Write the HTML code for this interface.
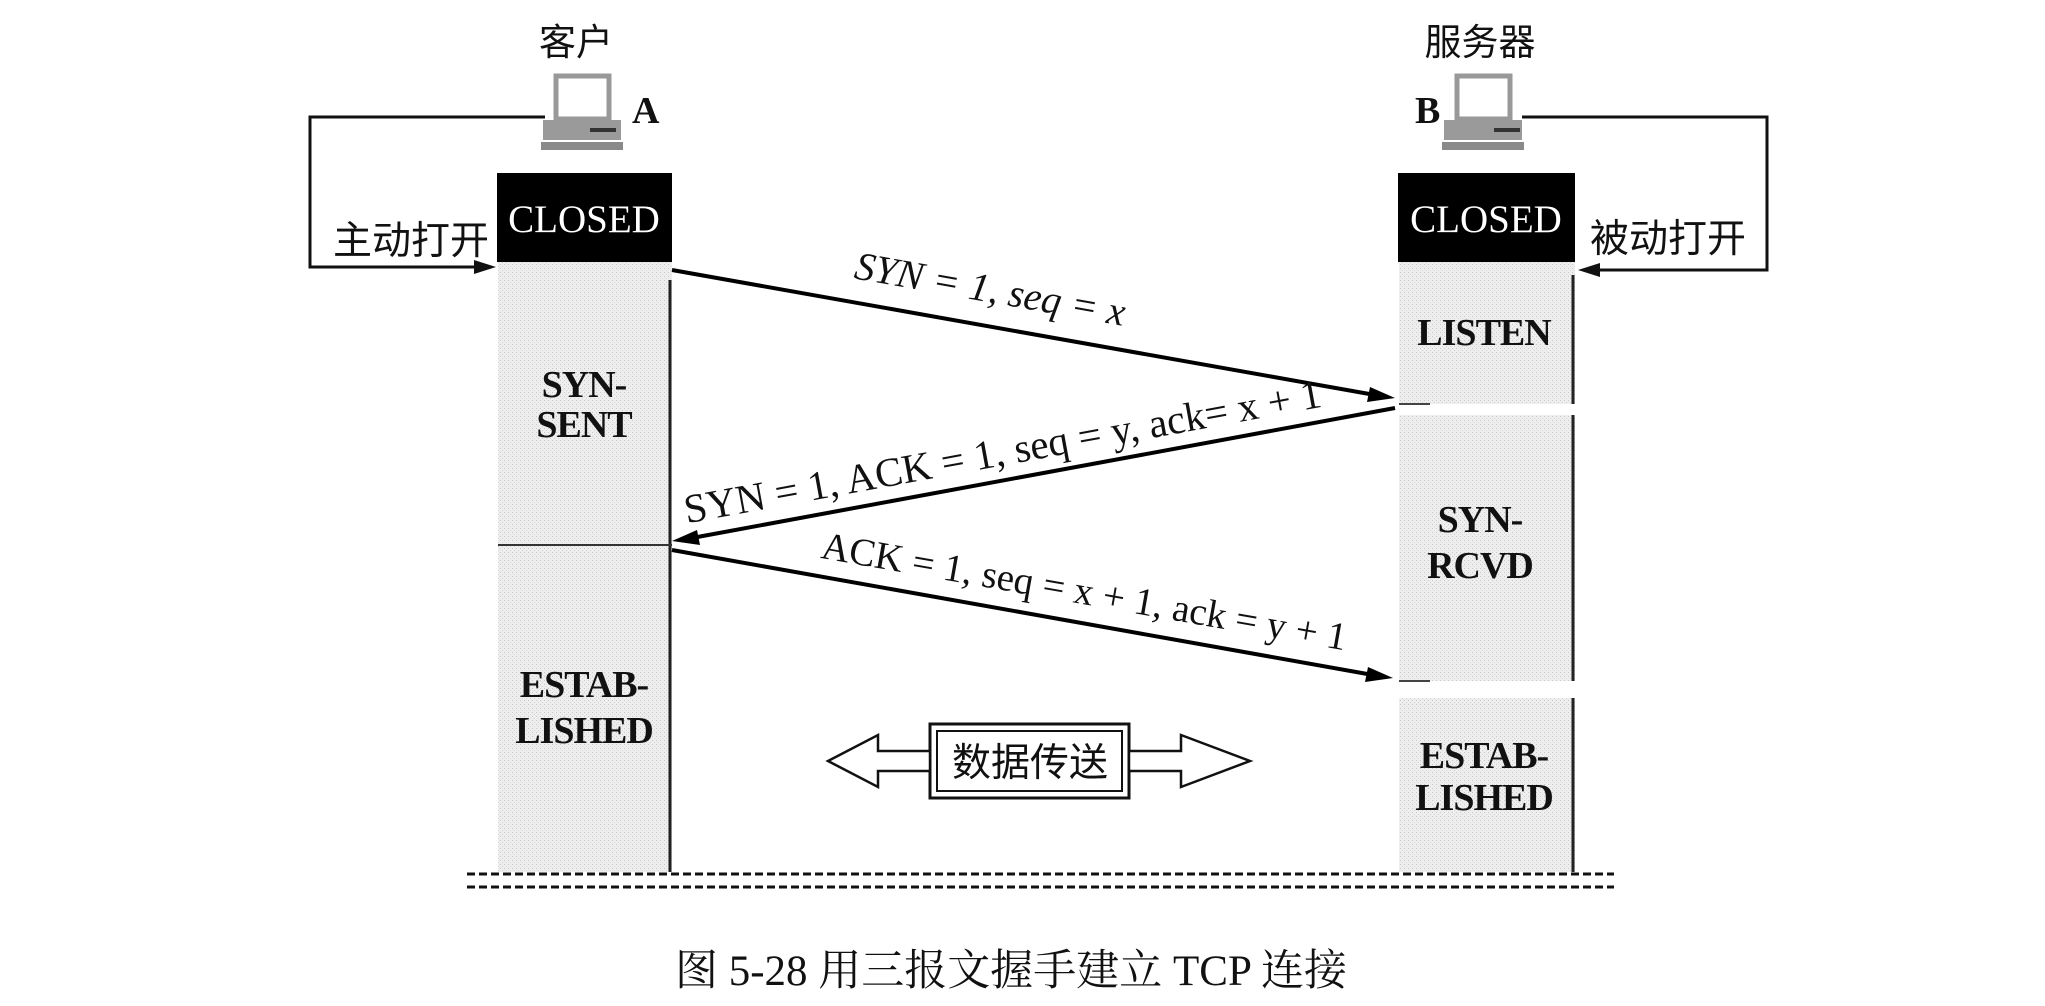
<!DOCTYPE html>
<html><head><meta charset="utf-8"><style>
html,body{margin:0;padding:0;background:#fff;}
svg{display:block}
text{font-family:"Liberation Serif","Noto Serif CJK SC",serif;fill:#111}
.cj{font-family:"Liberation Sans","Noto Sans CJK SC",sans-serif}
.lb{font-size:38px;font-weight:bold;letter-spacing:-1px}
</style></head><body>
<svg width="2045" height="1006" viewBox="0 0 2045 1006" xmlns="http://www.w3.org/2000/svg">
<defs>
<pattern id="dots" width="4" height="4" patternUnits="userSpaceOnUse">
<rect width="4" height="4" fill="#eeeeee"/><rect width="1" height="1" fill="#c8c8c8"/><rect x="2" y="2" width="1" height="1" fill="#d4d4d4"/>
</pattern>
</defs>

<!-- headers -->
<text class="cj" x="576" y="55" font-size="37" text-anchor="middle">客户</text>
<text class="cj" x="1480" y="55" font-size="37" text-anchor="middle">服务器</text>

<!-- computer A -->
<g>
<rect x="556" y="76" width="53" height="43" fill="#fff" stroke="#999" stroke-width="5"/>
<rect x="543" y="120" width="78" height="20" fill="#9a9a9a"/>
<rect x="590" y="128" width="26" height="4" fill="#333"/>
<rect x="541" y="142" width="82" height="8" fill="#8a8a8a"/>
</g>
<text x="632" y="123" font-size="38" font-weight="bold">A</text>
<!-- computer B -->
<g>
<rect x="1457" y="76" width="53" height="43" fill="#fff" stroke="#999" stroke-width="5"/>
<rect x="1444" y="120" width="78" height="20" fill="#9a9a9a"/>
<rect x="1494" y="128" width="26" height="4" fill="#333"/>
<rect x="1442" y="142" width="82" height="8" fill="#8a8a8a"/>
</g>
<text x="1415" y="123" font-size="38" font-weight="bold">B</text>

<!-- left column -->
<rect x="498" y="262" width="174" height="610" fill="url(#dots)"/>
<rect x="497" y="173" width="175" height="89" fill="#000"/>
<text x="584" y="232" font-size="39" style="fill:#fff" text-anchor="middle">CLOSED</text>
<line x1="670" y1="280" x2="670" y2="872" stroke="#222" stroke-width="3"/>
<line x1="498" y1="545" x2="672" y2="545" stroke="#333" stroke-width="2"/>
<text class="lb" x="584" y="397" text-anchor="middle">SYN-</text>
<text class="lb" x="584" y="437" text-anchor="middle">SENT</text>
<text class="lb" x="584" y="697" text-anchor="middle">ESTAB-</text>
<text class="lb" x="584" y="743" text-anchor="middle">LISHED</text>

<!-- right column -->
<rect x="1399" y="262" width="176" height="142" fill="url(#dots)"/>
<rect x="1399" y="415" width="176" height="266" fill="url(#dots)"/>
<rect x="1399" y="698" width="176" height="174" fill="url(#dots)"/>
<rect x="1398" y="173" width="177" height="89" fill="#000"/>
<text x="1486" y="232" font-size="39" style="fill:#fff" text-anchor="middle">CLOSED</text>
<line x1="1573" y1="275" x2="1573" y2="404" stroke="#222" stroke-width="3"/>
<line x1="1573" y1="415" x2="1573" y2="681" stroke="#222" stroke-width="3"/>
<line x1="1573" y1="698" x2="1573" y2="872" stroke="#222" stroke-width="3"/>
<line x1="1399" y1="404" x2="1430" y2="404" stroke="#444" stroke-width="2"/>
<line x1="1399" y1="681" x2="1430" y2="681" stroke="#444" stroke-width="2"/>
<text class="lb" x="1484" y="345" text-anchor="middle">LISTEN</text>
<text class="lb" x="1480" y="532" text-anchor="middle">SYN-</text>
<text class="lb" x="1480" y="578" text-anchor="middle">RCVD</text>
<text class="lb" x="1484" y="768" text-anchor="middle">ESTAB-</text>
<text class="lb" x="1484" y="810" text-anchor="middle">LISHED</text>

<!-- loops -->
<polyline points="545,117 310,117 310,267 478,267" fill="none" stroke="#111" stroke-width="3"/>
<polygon points="496,267 474,260 474,274" fill="#111"/>
<text class="cj" x="411" y="254" font-size="39" text-anchor="middle">主动打开</text>
<polyline points="1522,117 1767,117 1767,270 1596,270" fill="none" stroke="#111" stroke-width="3"/>
<polygon points="1578,270 1600,263 1600,277" fill="#111"/>
<text class="cj" x="1668" y="252" font-size="39" text-anchor="middle">被动打开</text>

<!-- message arrows -->
<line x1="672" y1="270" x2="1375" y2="395" stroke="#000" stroke-width="4"/>
<polygon points="1395,398 1370,387 1367,402" fill="#000"/>
<g transform="translate(988,302) rotate(10)"><text font-size="40" text-anchor="middle" font-style="italic">SYN = 1, seq = x</text></g>

<line x1="1395" y1="408" x2="692" y2="538" stroke="#000" stroke-width="4"/>
<polygon points="672,541 697,530 700,545" fill="#000"/>
<g transform="translate(1005,465) rotate(-10.4)"><text font-size="41" text-anchor="middle">SYN = 1, ACK = 1, seq = y, ack= x + 1</text></g>

<line x1="672" y1="550" x2="1373" y2="675" stroke="#000" stroke-width="4"/>
<polygon points="1393,678 1368,667 1365,682" fill="#000"/>
<g transform="translate(1082,604) rotate(10)"><text font-size="39" text-anchor="middle">ACK = 1, seq = x + 1, ack = y + 1</text></g>

<!-- data transfer -->
<rect x="930" y="724" width="199" height="74" fill="#fff" stroke="#111" stroke-width="3"/>
<rect x="937" y="731" width="185" height="60" fill="none" stroke="#111" stroke-width="2"/>
<text class="cj" x="1030" y="776" font-size="39" text-anchor="middle">数据传送</text>
<polygon points="930,751 878,751 878,735 828,761 878,787 878,771 930,771" fill="#fff" stroke="#111" stroke-width="2.5"/>
<polygon points="1129,751 1181,751 1181,735 1250,761 1181,787 1181,771 1129,771" fill="#fff" stroke="#111" stroke-width="2.5"/>

<!-- dashed lines -->
<line x1="467" y1="874" x2="1614" y2="874" stroke="#111" stroke-width="3" stroke-dasharray="8,4"/>
<line x1="467" y1="887" x2="1614" y2="887" stroke="#111" stroke-width="3" stroke-dasharray="8,4"/>

<!-- caption -->
<text x="1011" y="985" font-size="43" text-anchor="middle">图 5-28 用三报文握手建立 TCP 连接</text>
</svg>
</body></html>
